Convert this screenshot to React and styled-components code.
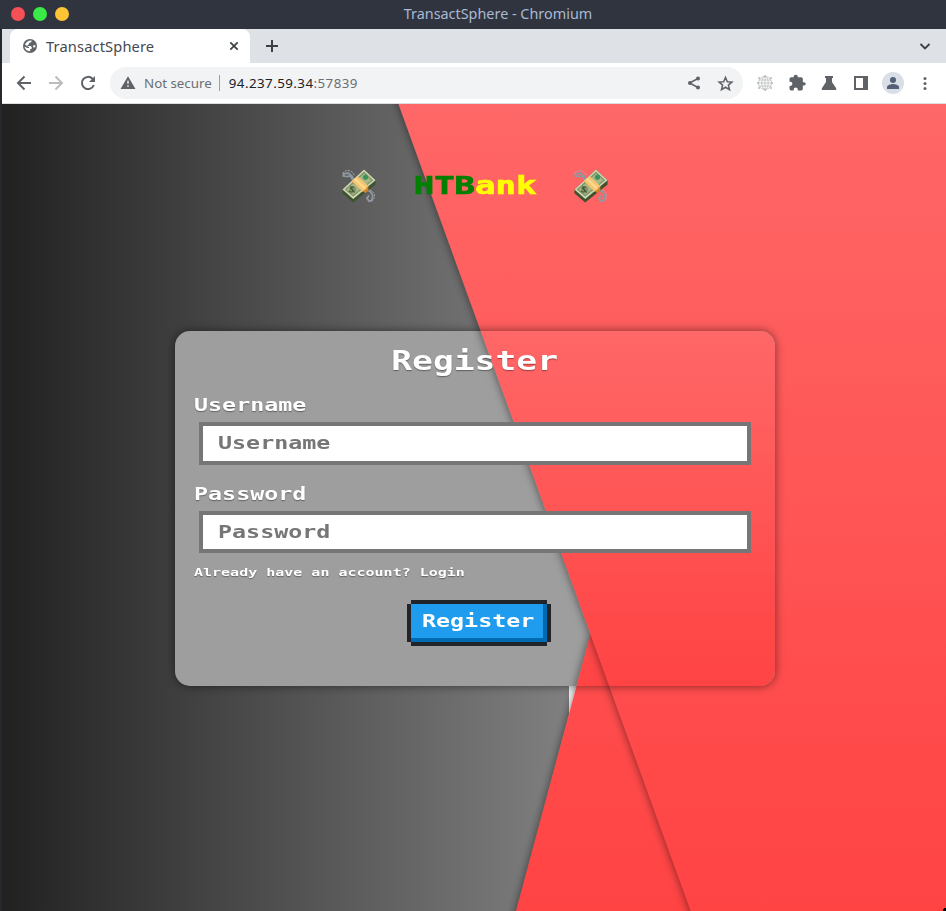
import React from 'react';
import styled, { createGlobalStyle } from 'styled-components';

const Global = createGlobalStyle`
  * { box-sizing: border-box; }
  body { margin: 0; overflow: hidden; font-family: "Noto Sans", sans-serif; }
`;

const Window = styled.div`
  width: 946px; height: 911px; display: flex; flex-direction: column; background: #25282c; padding-left: 2px;
`;
const TitleBar = styled.header`
  height: 29px; background: #30343f; display: grid; grid-template-columns: 1fr auto 1fr; align-items: center;
  margin-left: -2px; padding: 0 0 1px 50px; color: #a9b9d4; font-size: 14.4px; line-height: 20px;
`;
const Dots = styled.div`display: flex; gap: 8px; margin-left: -39px;`;
const Dot = styled.i`width: 14px; height: 14px; border-radius: 50%; background: ${p => p.$c};`;
const TabStrip = styled.div`
  height: 34px; background: #dee1e6; display: flex; align-items: center; padding: 0 15px 0 8px; color: #3c4043;
`;
const Tab = styled.div`
  width: 240px; height: 34px; background: #fff; border-radius: 8px 8px 0 0; display: flex; align-items: center;
  padding: 0 10px 1px 13px; gap: 9px; font-size: 14.67px; color: #45494d; margin-right: 14px;
`;
const TabTitle = styled.span`flex: 1; letter-spacing: .13px;`;
const Spacer = styled.span`flex: 1;`;
const Toolbar = styled.div`
  height: 41px; background: #fff; border-bottom: 1px solid #dcdedf; display: flex; align-items: center; padding: 0 11px 0 12px; gap: 12px;
`;
const Address = styled.div`
  width: 633px; height: 32px; border-radius: 16px; background: #f1f3f4; display: flex; align-items: center;
  padding: 0 9px; font-size: 13.33px; color: #6b6f73; white-space: pre;
`;
const Secure = styled.span`padding: 0 7px; border-right: 1px solid #9aa0a6; line-height: 16px; margin-right: 9px;`;
const Url = styled.span`letter-spacing: .45px;`;
const Host = styled.b`font-weight: 400; color: #202124;`;
const Actions = styled.div`display: flex; gap: ${p => p.$gap || 12}px; align-items: center;`;
const Avatar = styled.div`width: 22px; height: 22px; margin: 0 -1px; border-radius: 50%; background: #dadfe7; display: grid; place-items: center;`;
const Icon = styled.svg`display: block; flex: none; width: ${p => p.$s || 20}px; height: ${p => p.$s || 20}px; fill: ${p => p.$c || '#5f6368'};`;

const Page = styled.main`flex: 1; position: relative; overflow: hidden; display: flex; flex-direction: column; align-items: center; padding-left: 2px;`;
const Backdrop = styled.svg`position: absolute; inset: 0; width: 100%; height: 100%; display: block;`;
const Brand = styled.div`
  position: relative; display: flex; align-items: center; justify-content: space-between; width: 268px; height: 40px; margin-top: 62px;
`;
const Pixel = styled.span`
  display: block; width: max-content; font-family: "DejaVu Sans Mono", monospace; font-weight: 700; font-size: ${p => p.$size}px;
  line-height: ${p => p.$line}px; transform: scaleX(1.333); transform-origin: ${p => p.$origin || 'left'};
  color: ${p => p.$c || '#fff'}; text-shadow: ${p => (p.$flat ? 'none' : '0 1px 1px #0006')}; white-space: pre;
`;
const Logo = styled(Pixel)`padding-bottom: 3px; -webkit-text-stroke: .7px currentColor;`;
const Green = styled.span`color: #008000;`;
const Card = styled.section`
  position: relative; width: 600px; height: 355px; margin-top: 124.500px; border-radius: 15px; overflow: hidden;
  box-shadow: 0 0 10px rgba(0,0,0,.5);
  display: flex; flex-direction: column; padding: 14px 19px 0;
`;
const Content = styled.form`position: relative; display: flex; flex-direction: column;`;
const Heading = styled.div`display: flex; justify-content: center; height: 32px; margin-bottom: 16px; padding-right: 1px;`;
const Field = styled.div`
  height: ${p => p.$h}px; margin: ${p => p.$m}; border: 4px solid #767676; background: #fff; padding: 5px 15px;
`;
const ButtonRow = styled.div`display: flex; justify-content: center; margin: 23px 0 0 8px;`;
const Button = styled.div`
  width: 136px; height: 38px; background: #209cee; display: flex; justify-content: center; align-items: center; padding: 0 1px 3px 0;
  box-shadow: inset -4px -4px #006bb3, 0 -4px #212529, 0 4px #212529, 4px 0 #212529, -4px 0 #212529;
`;

function Money() {
  return (
    <Icon as="svg" $s={36} viewBox="0 0 50 50">
      <g fill="none" stroke="#8f98a0" strokeWidth="2.2">
        <path d="M18 17 15 11 10 7 4 8 3 11l5 1 5-1 4 7M35 30l6 3 3 5-1 7-4 1-3-4 3-4" strokeWidth="2.5" />
        <path d="M2 8c4-7 14-6 17 3M40 30c8 4 8 11 4 15" stroke="#a9aeb4" strokeWidth="1.2" strokeDasharray="3 1.5" />
      </g>
      <path d="M2 30 32 2l16 15v6L17 48 2 35z" fill="#3f522f" />
      <path d="M2 30 32 2l16 15-31 26z" fill="#d0d8b7" />
      <path d="m5 30 27-25 13 12-28 23z" fill="#84986a" />
      <path d="m8 30 24-22 10 9-25 20z" fill="#a8b78a" />
      <path d="m16 18 7-6 15 14v5l-4 4-18-15z" fill="#cf862c" />
      <path d="m15 18 8-7 15 14-8 8z" fill="#f5c571" />
      <path d="m19 15 15 14" stroke="#ffdb90" strokeWidth="3" />
      <circle cx="34" cy="13" r="3.5" fill="#38945b" />
      <ellipse cx="16" cy="30" rx="5" ry="5" fill="#829665" />
      <path d="M18 27c-4-2-6 1-3 3s0 5-4 2m2-6 6 8" fill="none" stroke="#465b3b" strokeWidth="1.6" />
    </Icon>
  );
}

function RedShapes({ id, top, bottom }) {
  return (
    <>
      <defs>
        <linearGradient id={id} gradientUnits="userSpaceOnUse" x1="0" x2="0" y1={top} y2={bottom}>
          <stop stopColor="#ff6767" /><stop offset="1" stopColor="#ff4343" />
        </linearGradient>
        <filter id={id + 's'} filterUnits="userSpaceOnUse" x="0" y="-50" width="1100" height="1000">
          <feDropShadow dx="0" dy="0" stdDeviation="5" floodColor="#000" floodOpacity=".55" />
        </filter>
      </defs>
      <path d="M588.500 530 491 893h255z" fill={`url(#${id})`} filter={`url(#${id}s)`} />
      <path d="M382-40 720 893h330V-40H382z" fill={`url(#${id})`} filter={`url(#${id}s)`} />
    </>
  );
}

export default function App() {
  return (
    <>
      <Global />
      <Window>
        <TitleBar>
          <Dots><Dot $c="#f65057" /><Dot $c="#39ea49" /><Dot $c="#fdc535" /></Dots>
          <span>TransactSphere - Chromium</span>
        </TitleBar>
        <TabStrip>
          <Tab>
            <Icon $s={14} viewBox="0 0 14 14"><circle cx="7" cy="7" r="7" /><path fill="#fff" d="M8.500 1.500v1L7.300 3.700H6v1.500L4.600 6v1H7.700l1.200 1.500v1l-1.700.8v2C4 12.600 1.700 10 1.600 7.600L4.300 9H6V8L4 7 2 5.500C3 3 5.500 1.200 8.500 1.500zM10.500 6l2 .6-.2 1.700-2.300.2z" /></Icon>
            <TabTitle>TransactSphere</TabTitle>
            <Icon $s={12} viewBox="0 0 12 12"><path d="m2.300 2.300 7.400 7.400m0-7.400-7.400 7.400" stroke="#3c4043" strokeWidth="1.7" /></Icon>
          </Tab>
          <Icon $s={16} viewBox="0 0 16 16"><path d="M8 2v12M2 8h12" stroke="#3c4043" strokeWidth="2" /></Icon>
          <Spacer />
          <Icon $s={12} viewBox="0 0 12 12"><path d="m1.500 4 4.500 4.500L10.500 4" fill="none" stroke="#3c4043" strokeWidth="1.800" /></Icon>
        </TabStrip>
        <Toolbar>
          <Icon viewBox="0 0 20 20"><path d="M17 10H4m6.500-6.500L4 10l6.500 6.500" fill="none" stroke="#5f6368" strokeWidth="2" /></Icon>
          <Icon viewBox="0 0 20 20"><path d="M3 10h13M9.500 3.500 16 10l-6.500 6.500" fill="none" stroke="#babcbe" strokeWidth="2" /></Icon>
          <Icon viewBox="0 0 20 20"><path d="M15.800 12A6.100 6.100 0 1 1 14.500 5.800L16 7.500" fill="none" stroke="#5f6368" strokeWidth="2" /><path d="M17 3v6h-6z" /></Icon>
          <Address>
            <Icon $s={18} viewBox="0 0 24 24"><path d="M2 20h20L12 3zm11-3h-2v-2h2zm0-4h-2V9h2z" /></Icon>
            <Secure>Not secure</Secure><Url><Host>94.237.59.34</Host>:57839</Url>
            <Spacer />
            <Actions $gap={13}>
              <Icon viewBox="0 0 20 20"><path d="M14 5.500 5.500 10l8.500 4.500" fill="none" stroke="#5f6368" strokeWidth="1.500" /><circle cx="14" cy="5.500" r="2" /><circle cx="6" cy="10" r="2" /><circle cx="14" cy="14.500" r="2" /></Icon>
              <Icon $s={17} viewBox="0 0 24 24"><path d="m12 3.500 2.600 6 6.400.5-4.900 4.300 1.500 6.400-5.600-3.400-5.600 3.400 1.500-6.400L3 10l6.400-.5z" fill="none" stroke="#5f6368" strokeWidth="2.200" /></Icon>
            </Actions>
          </Address>
          <Actions>
            <Icon viewBox="0 0 20 20"><g fill="none" stroke="#b9bbbd" strokeWidth=".8"><circle cx="10" cy="10" r="6.500" /><ellipse cx="10" cy="10" rx="3.200" ry="6.500" /><path d="M10 3v14M3 10h14M4 7h12M4 13h12" /><path d="M9 3h2M9 17h2M3 5h2m10 0h2M3 15h2m10 0h2M2 10h2m12 0h2" strokeWidth="1.700" /></g></Icon>
            <Icon viewBox="0 0 24 24"><path d="M20.500 11H19V7a2 2 0 0 0-2-2h-4V4.500a2.500 2.500 0 0 0-5 0V5H5a2 2 0 0 0-2 2v3.500h1a2.500 2.500 0 0 1 0 5H3V19a2 2 0 0 0 2 2h3v-1a2.500 2.500 0 0 1 5 0v1h4a2 2 0 0 0 2-2v-4h1.500a2 2 0 0 0 0-4z" /></Icon>
            <Icon viewBox="0 0 20 20"><path d="M6 3h8v2h-1v4l4 6q1 2-1 2H4q-2 0-1-2l4-6V5H6z" /></Icon>
            <Icon viewBox="0 0 20 20"><path d="M3 3h14v14H3zm2 2v10h7V5z" fillRule="evenodd" /></Icon>
            <Avatar><Icon $s={16} $c="#536078" viewBox="0 0 16 16"><circle cx="8" cy="5" r="3" /><path d="M2 14v-2c0-2 4-3 6-3s6 1 6 3v2z" /></Icon></Avatar>
            <Icon viewBox="0 0 20 20"><circle cx="10" cy="5.500" r="1.500" /><circle cx="10" cy="10.500" r="1.500" /><circle cx="10" cy="15.500" r="1.500" /></Icon>
          </Actions>
        </Toolbar>
        <Page>
          <Backdrop viewBox="0 0 944 807">
            <defs><linearGradient id="grey"><stop stopColor="#212121" /><stop offset="1" stopColor="#808080" /></linearGradient></defs>
            <rect width="944" height="807" fill="#fff" />
            <rect width="567" height="807" fill="url(#grey)" />
            <RedShapes id="page" top="0" bottom="807" />
            <path d="M941 807v-2h1v-1h2v3z" fill="#000" />
          </Backdrop>
          <Brand>
            <Money />
            <Logo $size={25.5} $line={34} $origin="center" $c="#ff0" $flat><Green>HTB</Green>ank</Logo>
            <Money />
          </Brand>
          <Card>
            <Backdrop viewBox="173 227 600 355">
              <rect x="173" y="227" width="600" height="355" fill="#9e9e9e" />
              <RedShapes id="card" top="227" bottom="582" />
            </Backdrop>
            <Content>
              <Heading><Pixel $size={26} $line={32} $origin="center">Register</Pixel></Heading>
              <Pixel $size={17.5} $line={24}>Username</Pixel>
              <Field $h={43} $m="5px 5px 17px"><Pixel $size={17.5} $line={24} $c="#767676" $flat>Username</Pixel></Field>
              <Pixel $size={17.5} $line={24}>Password</Pixel>
              <Field $h={42} $m="5px 5px 12px"><Pixel $size={17.5} $line={24} $c="#767676" $flat>Password</Pixel></Field>
              <Pixel $size={11.25} $line={16}>Already have an account? Login</Pixel>
              <ButtonRow><Button><Pixel $size={17.5} $line={24} $origin="center" $flat>Register</Pixel></Button></ButtonRow>
            </Content>
          </Card>
        </Page>
      </Window>
    </>
  );
}
